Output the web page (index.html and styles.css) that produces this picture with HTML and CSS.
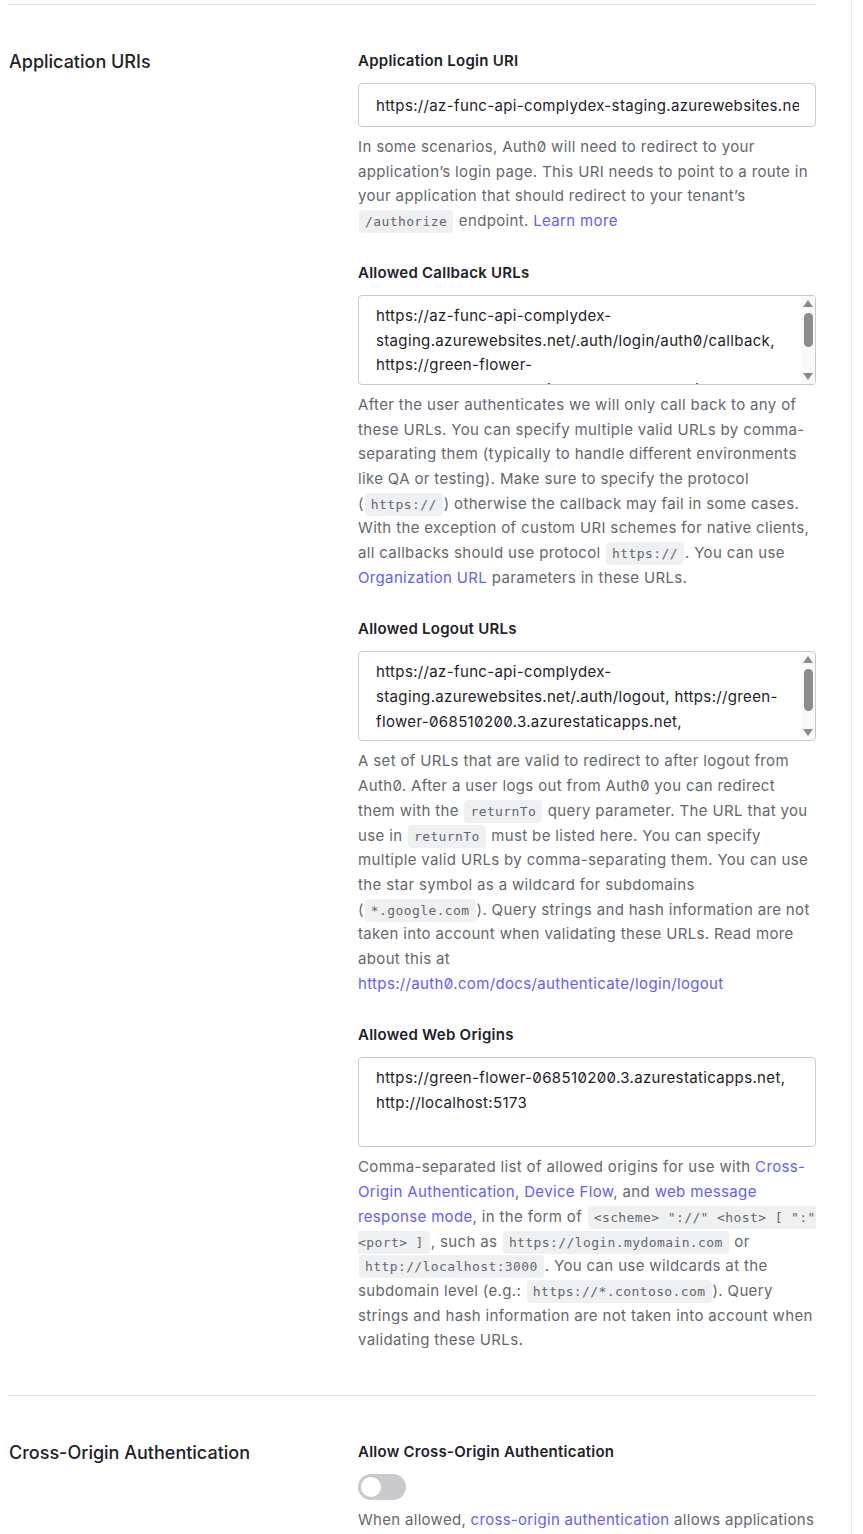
FILE: index.html
```html
<!DOCTYPE html>
<html lang="en">
<head>
<meta charset="utf-8">
<title>Application URIs</title>
<link rel="stylesheet" href="styles.css">
</head>
<body>
<div class="page">
  <section class="section">
    <h2 class="section-title">Application URIs</h2>
    <div class="fields">
      <div class="field">
        <label class="field-label" for="login-uri">Application Login URI</label>
        <input id="login-uri" class="input" type="text" value="https://az-func-api-complydex-staging.azurewebsites.net/.auth/login/auth0">
        <p class="help">In some scenarios, Auth0 will need to redirect to your application’s login page. This URI needs to point to a route in your application that should redirect to your tenant’s <code>/authorize</code> endpoint. <a href="#">Learn more</a></p>
      </div>
      <div class="field">
        <label class="field-label" for="callbacks">Allowed Callback URLs</label>
        <div class="textarea-wrap">
          <textarea id="callbacks" class="textarea">https://az-func-api-complydex-staging.azurewebsites.net/.auth/login/auth0/callback, https://green-flower-068510200.3.azurestaticapps.net/.auth/login/auth0/callback, http://localhost:5173/callback, http://localhost:7071/.auth/login/auth0/callback</textarea>
          <div class="scrollbar" aria-hidden="true">
            <span class="arrow arrow-up"></span>
            <span class="thumb thumb-callbacks"></span>
            <span class="arrow arrow-down"></span>
          </div>
        </div>
        <p class="help">After the user authenticates we will only call back to any of these URLs. You can specify multiple valid URLs by comma-separating them (typically to handle different environments like QA or testing). Make sure to specify the protocol (<code>https://</code>) otherwise the callback may fail in some cases. With the exception of custom URI schemes for native clients, all callbacks should use protocol <code>https://</code>. You can use <a href="#">Organization URL</a> parameters in these URLs.</p>
      </div>
      <div class="field">
        <label class="field-label" for="logouts">Allowed Logout URLs</label>
        <div class="textarea-wrap">
          <textarea id="logouts" class="textarea">https://az-func-api-complydex-staging.azurewebsites.net/.auth/logout, https://green-flower-068510200.3.azurestaticapps.net, ...://localhost:5173, http://localhost:7071/.auth/logout</textarea>
          <div class="scrollbar" aria-hidden="true">
            <span class="arrow arrow-up"></span>
            <span class="thumb thumb-logouts"></span>
            <span class="arrow arrow-down"></span>
          </div>
        </div>
        <p class="help">A set of URLs that are valid to redirect to after logout from Auth0. After a user logs out from Auth0 you can redirect them with the <code>returnTo</code> query parameter. The URL that you use in <code>returnTo</code> must be listed here. You can specify multiple valid URLs by comma-separating them. You can use the star symbol as a wildcard for subdomains (<code>*.google.com</code>). Query strings and hash information are not taken into account when validating these URLs. Read more about this at <a href="#">https://auth0.com/docs/authenticate/login/logout</a></p>
      </div>
      <div class="field">
        <label class="field-label" for="origins">Allowed Web Origins</label>
        <textarea id="origins" class="textarea textarea-plain">https://green-flower-068510200.3.azurestaticapps.net, http://localhost:5173</textarea>
        <p class="help">Comma-separated list of allowed origins for use with <a href="#">Cross-Origin Authentication</a>, <a href="#">Device Flow</a>, and <a href="#">web message response mode</a>, in the form of <code>&lt;scheme&gt; "://" &lt;host&gt; [ ":" &lt;port&gt; ]</code>, such as <code>https://login.mydomain.com</code> or <code>http://localhost:3000</code>. You can use wildcards at the subdomain level (e.g.: <code>https://*.contoso.com</code>). Query strings and hash information are not taken into account when validating these URLs.</p>
      </div>
    </div>
  </section>
  <section class="section">
    <h2 class="section-title">Cross-Origin Authentication</h2>
    <div class="fields">
      <div class="field">
        <span class="field-label">Allow Cross-Origin Authentication</span>
        <span class="toggle" role="switch" aria-checked="false"><span class="knob"></span></span>
        <p class="help help-toggle">When allowed, <a href="#">cross-origin authentication</a> allows applications to make cross-origin calls to authenticate users from a page that is not hosted on your Auth0 domain.</p>
      </div>
    </div>
  </section>
</div>
</body>
</html>
```

FILE: styles.css
```css
* { box-sizing: border-box; }

html, body {
  margin: 0;
  padding: 0;
  background: #ffffff;
}

body {
  font-family: Inter, "Noto Sans", "Liberation Sans", sans-serif;
  font-feature-settings: "zero" 1;
  color: #1e212a;
}

.page {
  width: 852px;
  min-height: 1534px;
  border-right: 1px solid #e4e4e7;
  padding: 4px 0 0 8px;
}

.section {
  width: 808px;
  border-top: 1px solid #e3e4e6;
  padding: 45px 0 42px 0;
  display: grid;
  grid-template-columns: 350px 458px;
}

.section-title {
  margin: 0;
  font-size: 18px;
  line-height: 24px;
  font-weight: 500;
  color: #1e212a;
  padding-left: 1px;
}

.fields {
  display: flex;
  flex-direction: column;
  gap: 28px;
}

.field {
  display: flex;
  flex-direction: column;
}

.field-label {
  font-size: 15px;
  line-height: 20px;
  font-weight: 600;
  letter-spacing: 0.25px;
  color: #1e212a;
  margin: 1px 0 12px 0;
}

.input,
.textarea {
  display: block;
  width: 458px;
  border: 1px solid #c9cace;
  border-radius: 4px;
  font-family: inherit;
  font-feature-settings: "zero" 1;
  font-size: 15px;
  letter-spacing: 0.35px;
  color: #1e212a;
  background: #fff;
  outline: none;
}

.input {
  height: 44px;
  padding: 0 16px 0 17px;
}

.textarea {
  height: 90px;
  margin: 0;
  padding: 8px 30px 6px 17px;
  line-height: 24.7px;
  resize: none;
  overflow: hidden;
}

.textarea-plain {
  padding-right: 16px;
}

.textarea-wrap {
  position: relative;
  width: 458px;
}

.scrollbar {
  position: absolute;
  top: 1px;
  right: 1px;
  bottom: 1px;
  width: 14px;
  background: #f9f9f9;
  border-radius: 0 3px 3px 0;
  display: flex;
  flex-direction: column;
  align-items: center;
  padding: 4px 0 4px 0;
}

.arrow {
  display: block;
  width: 0;
  height: 0;
  border-left: 5px solid transparent;
  border-right: 5px solid transparent;
}

.arrow-up {
  border-bottom: 7px solid #8a8a8a;
}

.arrow-down {
  border-top: 7px solid #8a8a8a;
  margin-top: auto;
}

.thumb {
  display: block;
  width: 9px;
  border-radius: 5px;
  background: #8c8c8c;
}

.thumb-callbacks {
  margin-top: 6px;
  height: 34px;
}

.thumb-logouts {
  margin-top: 6px;
  height: 42px;
}

.help {
  margin: 8px 0 0 0;
  font-size: 15px;
  line-height: 24.7px;
  letter-spacing: 0.35px;
  color: #65676e;
}

.help a {
  color: #635dff;
  text-decoration: none;
}

.help code {
  font-family: "DejaVu Sans Mono", "Liberation Mono", monospace;
  font-feature-settings: normal;
  font-size: 13px;
  line-height: 14px;
  letter-spacing: 0.4px;
  color: #65676e;
  background: #eff0f2;
  border-radius: 4px;
  padding: 4px 6px;
  margin: 0 1px;
}

.toggle {
  display: block;
  position: relative;
  width: 48px;
  height: 26px;
  border-radius: 13px;
  background: #c9cace;
}

.knob {
  position: absolute;
  left: 3px;
  top: 3px;
  width: 20px;
  height: 20px;
  border-radius: 50%;
  background: #fff;
}

.help-toggle {
  margin-top: 8px;
  letter-spacing: 0.3px;
}
```
